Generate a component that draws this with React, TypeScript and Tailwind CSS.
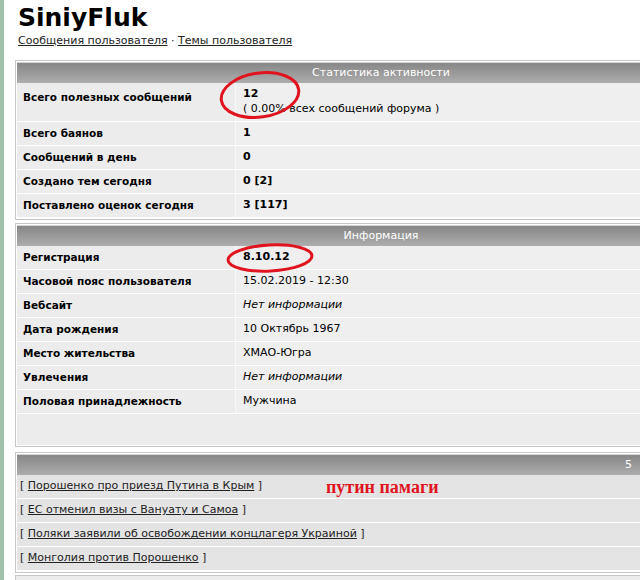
import React from "react";

const font = { fontFamily: '"DejaVu Sans", Verdana, sans-serif' };

function Header({ title }: { title: string }) {
  return (
    <div className="h-[21px] border-t border-[#d4d4d4] bg-gradient-to-b from-[#878787] to-[#adadad] text-white text-[11px] leading-[19px] text-center">
      {title}
    </div>
  );
}

function Row({ label, children, tall }: { label: string; children: React.ReactNode; tall?: boolean }) {
  return (
    <div className={`flex border-b border-white ${tall ? "h-[39px]" : "h-[24px]"}`}>
      <div className={`w-[218px] shrink-0 bg-[#ececec] pl-[6px] font-bold text-[10.5px] text-black flex ${tall ? "items-start pt-[7px]" : "items-center"}`}>
        {label}
      </div>
      <div className="w-[1px] bg-[#f8f8f8]" />
      <div className={`flex-1 bg-[#efefef] pl-[7px] text-[11px] text-black flex ${tall ? "flex-col justify-start pt-[3px] leading-[15px]" : "items-center"}`}>
        {children}
      </div>
    </div>
  );
}

function TopicRow({ text, extra }: { text: string; extra?: React.ReactNode }) {
  return (
    <div className="h-[24px] border-b border-white bg-[#e4e4e4] pl-[3px] flex items-center text-[11px] text-[#222] whitespace-nowrap">
      <span className="w-[306px] shrink-0">
        [ <span className="underline">{text}</span> ]
      </span>
      {extra}
    </div>
  );
}

export default function App() {
  return (
    <div className="w-[640px] h-[580px] overflow-hidden bg-white border-l-4 border-[#9fc3aa] relative" style={font}>
      <div className="pl-[14px] pt-[2px]">
        <div className="text-[25px] font-bold leading-[32px] text-black">SiniyFluk</div>
        <div className="text-[11px] leading-[14px] text-[#222]">
          <span className="underline">Сообщения пользователя</span> · <span className="underline">Темы пользователя</span>
        </div>
      </div>

      <div className="pl-[11px]">
        <div className="mt-[12px] w-[732px] border border-[#c6c6c6] p-[1px] bg-white">
          <Header title="Статистика активности" />
          <Row label="Всего полезных сообщений" tall>
            <span className="font-bold">12</span>
            <span>( 0.00% всех сообщений форума )</span>
          </Row>
          <Row label="Всего баянов"><span className="font-bold">1</span></Row>
          <Row label="Сообщений в день"><span className="font-bold">0</span></Row>
          <Row label="Создано тем сегодня"><span className="font-bold">0 [2]</span></Row>
          <Row label="Поставлено оценок сегодня"><span className="font-bold">3 [117]</span></Row>
        </div>

        <div className="mt-[3px] w-[732px] border border-[#c6c6c6] p-[1px] bg-white">
          <Header title="Информация" />
          <Row label="Регистрация"><span className="font-bold">8.10.12</span></Row>
          <Row label="Часовой пояс пользователя">15.02.2019 - 12:30</Row>
          <Row label="Вебсайт"><span className="italic">Нет информации</span></Row>
          <Row label="Дата рождения">10 Октябрь 1967</Row>
          <Row label="Место жительства">ХМАО-Югра</Row>
          <Row label="Увлечения"><span className="italic">Нет информации</span></Row>
          <Row label="Половая принадлежность">Мужчина</Row>
          <div className="h-[31px] bg-[#ececec]" />
        </div>

        <div className="mt-[5px] w-[732px] border border-[#c6c6c6] p-[1px] bg-white">
          <div className="h-[21px] border-t border-[#d4d4d4] bg-gradient-to-b from-[#878787] to-[#adadad] text-white text-[11px] leading-[19px]">
            <div className="w-[615px] text-right">5</div>
          </div>
          <TopicRow
            text="Порошенко про приезд Путина в Крым"
            extra={
              <span className="text-[#e0141e] font-bold text-[18px] leading-[20px]" style={{ fontFamily: '"Liberation Serif", serif' }}>
                путин памаги
              </span>
            }
          />
          <TopicRow text="ЕС отменил визы с Вануату и Самоа" />
          <TopicRow text="Поляки заявили об освобождении концлагеря Украиной" />
          <TopicRow text="Монголия против Порошенко" />
        </div>
        <div className="mt-[2px] w-[732px] h-[20px] border border-[#c6c6c6] bg-[#ececec]" />
      </div>

      <svg className="absolute left-0 top-0 pointer-events-none" width="640" height="580">
        <ellipse cx="256" cy="95" rx="39" ry="22" transform="rotate(-8 256 95)" fill="none" stroke="#e0141e" strokeWidth="3" />
        <ellipse cx="266" cy="258" rx="42" ry="13" transform="rotate(-3 266 258)" fill="none" stroke="#e0141e" strokeWidth="3" />
      </svg>
    </div>
  );
}
